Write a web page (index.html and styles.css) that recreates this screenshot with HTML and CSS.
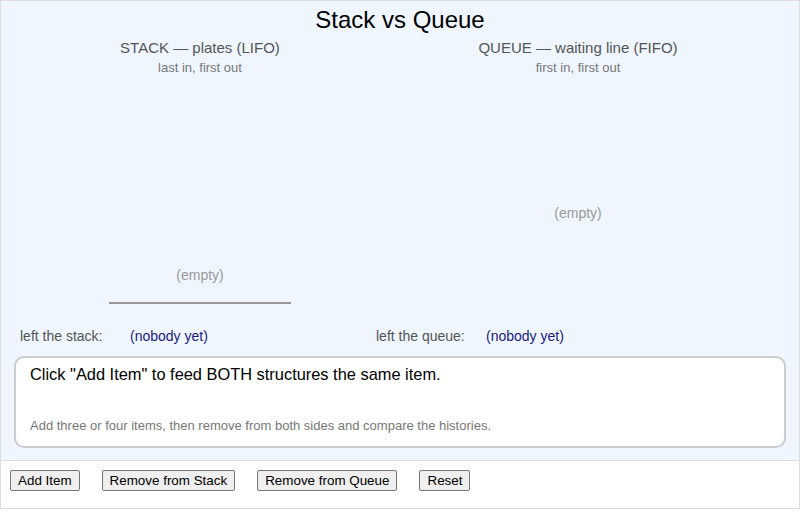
FILE: index.html
```html
<!DOCTYPE html>
<html>
<head>
<meta charset="utf-8">
<link rel="stylesheet" href="styles.css">
</head>
<body>
<div class="app">
  <div class="main">
    <h1 class="title">Stack vs Queue</h1>
    <div class="columns">
      <div class="col col-stack">
        <div class="col-head">STACK — plates (LIFO)</div>
        <div class="col-sub">last in, first out</div>
        <div class="stage stage-stack">
          <div class="empty">(empty)</div>
          <div class="plate-base"></div>
        </div>
      </div>
      <div class="col col-queue">
        <div class="col-head">QUEUE — waiting line (FIFO)</div>
        <div class="col-sub">first in, first out</div>
        <div class="stage stage-queue">
          <div class="empty">(empty)</div>
        </div>
      </div>
    </div>
    <div class="history">
      <div class="hist-item"><span class="hist-label">left the stack:</span><span class="hist-value">(nobody yet)</span></div>
      <div class="hist-item"><span class="hist-label">left the queue:</span><span class="hist-value">(nobody yet)</span></div>
    </div>
    <div class="message">
      <div class="msg-main">Click "Add Item" to feed BOTH structures the same item.</div>
      <div class="msg-hint">Add three or four items, then remove from both sides and compare the histories.</div>
    </div>
  </div>
  <div class="controls">
    <button class="btn">Add Item</button>
    <button class="btn">Remove from Stack</button>
    <button class="btn">Remove from Queue</button>
    <button class="btn">Reset</button>
  </div>
</div>
</body>
</html>
```

FILE: styles.css
```css
html, body {
  margin: 0;
  padding: 0;
  background: #ffffff;
}
body {
  font-family: "Liberation Sans", Arial, sans-serif;
}
.app {
  width: 800px;
  height: 509px;
  box-sizing: border-box;
  border: 1px solid #dddddd;
  display: flex;
  flex-direction: column;
}
.main {
  background: #eff6ff;
  height: 460px;
  box-sizing: border-box;
  border-bottom: 1px solid #dddddd;
  padding: 5px 13px 0 13px;
  display: flex;
  flex-direction: column;
}
.title {
  margin: 0;
  font-size: 24px;
  font-weight: normal;
  line-height: 28px;
  text-align: center;
  color: #000;
}
.columns {
  display: flex;
  gap: 6px;
  margin-top: 5px;
}
.col {
  width: 372px;
  display: flex;
  flex-direction: column;
  align-items: center;
}
.col-head {
  font-size: 15px;
  line-height: 18px;
  color: #555555;
}
.col-sub {
  font-size: 13px;
  line-height: 16px;
  color: #777777;
  margin-top: 3px;
}
.stage {
  height: 228px;
  width: 100%;
  display: flex;
  flex-direction: column;
  align-items: center;
  box-sizing: border-box;
}
.stage-stack {
  justify-content: flex-end;
}
.stage-queue {
  justify-content: center;
  padding-top: 46px;
}
.empty {
  font-size: 14px;
  line-height: 16px;
  color: #999999;
}
.plate-base {
  width: 182px;
  height: 2px;
  background: #999999;
  margin-top: 19px;
}
.history {
  display: flex;
  margin-top: 24px;
  padding-left: 6px;
  font-size: 14px;
  line-height: 16px;
}
.hist-item {
  width: 356px;
  display: flex;
}
.hist-label {
  width: 110px;
  color: #555555;
}
.hist-value {
  color: #1a1a80;
}
.message {
  margin-top: 12px;
  background: #ffffff;
  border: 2px solid #cccccc;
  border-radius: 10px;
  height: 92px;
  box-sizing: border-box;
  padding: 6px 14px 0 14px;
  display: flex;
  flex-direction: column;
}
.msg-main {
  font-size: 16.4px;
  line-height: 20px;
  color: #000000;
}
.msg-hint {
  margin-top: auto;
  margin-bottom: 12px;
  font-size: 13px;
  line-height: 16px;
  color: #777777;
}
.controls {
  padding: 9px 9px;
  display: flex;
  gap: 22px;
  align-items: flex-start;
}
.btn {
  font-family: "Liberation Sans", Arial, sans-serif;
  font-size: 13.4px;
  line-height: 15px;
  padding: 2px 7px;
  background: #efefef;
  border: 1px solid #767676;
  border-radius: 2px;
  color: #000;
}
```
